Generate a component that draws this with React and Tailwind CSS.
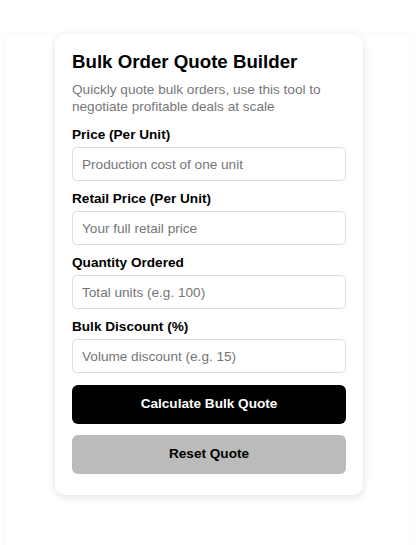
import { useState } from "react";

const fields = [
  { id: "price", label: "Price (Per Unit)", placeholder: "Production cost of one unit" },
  { id: "retail", label: "Retail Price (Per Unit)", placeholder: "Your full retail price" },
  { id: "qty", label: "Quantity Ordered", placeholder: "Total units (e.g. 100)" },
  { id: "discount", label: "Bulk Discount (%)", placeholder: "Volume discount (e.g. 15)" },
];

export default function App() {
  const [values, setValues] = useState({});

  function reset() {
    setValues({});
  }

  return (
    <div className="min-h-[545px] bg-white font-['Liberation_Sans',Arial,sans-serif] overflow-hidden">
      <div className="mt-[38px] ml-[6px] mr-[4px] min-h-[520px] bg-white shadow-[0_0_5px_rgba(0,0,0,0.035)]">
        <div className="-mt-[4px] mx-auto w-[308px] bg-white rounded-[10px] shadow-[0_2px_8px_rgba(0,0,0,0.12)] px-[17px] pt-[17px] pb-[21px]">
          <h3 className="text-[18.7px] leading-[22px] font-bold text-black">
            Bulk Order Quote Builder
          </h3>
          <p className="mt-[9px] text-[13.6px] leading-[16.5px] text-[#777]">
            Quickly quote bulk orders, use this tool to negotiate profitable deals at scale
          </p>

          <div className="mt-[12px] flex flex-col gap-[10px]">
            {fields.map((f) => (
              <div key={f.id} className="flex flex-col gap-[4px]">
                <label className="text-[13.6px] leading-[16px] font-bold text-black">
                  {f.label}
                </label>
                <input
                  className="h-[34px] w-full rounded-[5px] border border-[#ddd] px-[9px] text-[13.6px] placeholder:text-[#757575] outline-none"
                  placeholder={f.placeholder}
                  value={values[f.id] || ""}
                  onChange={(e) => setValues({ ...values, [f.id]: e.target.value })}
                />
              </div>
            ))}
          </div>

          <button className="mt-[12px] w-full h-[39px] rounded-[6px] bg-black text-white text-[13.6px] font-bold">
            Calculate Bulk Quote
          </button>
          <button
            onClick={reset}
            className="mt-[11px] w-full h-[39px] rounded-[6px] bg-[#bbb] text-black text-[13.6px] font-bold"
          >
            Reset Quote
          </button>
        </div>
      </div>
    </div>
  );
}
